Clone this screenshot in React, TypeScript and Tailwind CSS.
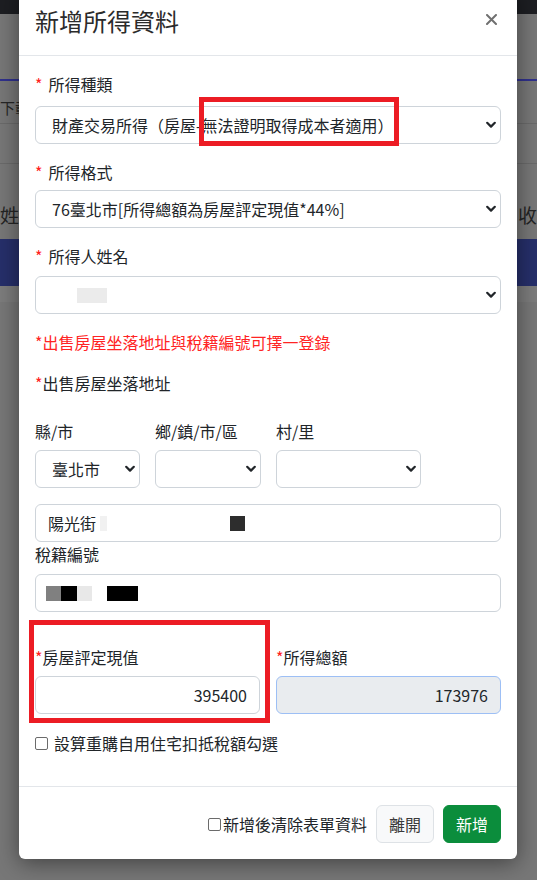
import type { ReactNode } from "react";

const FONT = "font-['Noto_Sans_CJK_TC','Noto_Sans',sans-serif]";

function Chevron() {
  return (
    <svg width="10" height="8" viewBox="0 0 10 8" className="mr-1 shrink-0" aria-hidden="true">
      <path d="M1.2 1.8 5 5.6l3.8-3.8" fill="none" stroke="#212529" strokeWidth="2.2" strokeLinecap="round" strokeLinejoin="round" />
    </svg>
  );
}

function FakeSelect({ children, className = "" }: { children?: ReactNode; className?: string }) {
  return (
    <div
      className={`flex h-[38px] items-center rounded-md border border-[#ced4da] bg-white pl-4 text-base text-[#212529] ${className}`}
    >
      <div className="flex min-w-0 flex-1 items-center whitespace-nowrap">{children}</div>
      <Chevron />
    </div>
  );
}

function Req({ space = false }: { space?: boolean }) {
  return <span className={`text-[#ff2020] ${space ? "mr-1.5" : ""}`}>*</span>;
}

function Box({ className }: { className: string }) {
  return <span className={`inline-block h-[15px] ${className}`} />;
}

function Check({ className = "" }: { className?: string }) {
  return (
    <span
      className={`inline-block h-[13px] w-[13px] shrink-0 rounded-[2px] border border-[#6b6b6b] bg-white ${className}`}
    />
  );
}

export default function App() {
  return (
    <div className={`relative h-[880px] w-[537px] overflow-hidden bg-[#777777] ${FONT}`}>
      {/* dimmed page behind the dialog */}
      <div className="flex flex-col">
        <div className="h-[14px] bg-[#1d1e22]" />
        <div className="h-[65px]" />
        <div className="h-[2px] bg-[#30318c]" />
        <div className="flex h-[43px] items-center border-b border-[#6a6a6a] pt-[13px] text-[15px] text-[#262626]">
          下載
        </div>
        <div className="h-[40px] border-b border-[#6a6a6a]" />
        <div className="flex h-[75px] items-center pt-[28px] text-[19px] text-[#242424]">
          <span className="w-[518px] shrink-0">姓名</span>
          <span className="shrink-0 whitespace-nowrap">收入</span>
        </div>
        <div className="h-[47px] bg-[#262f6a]" />
        <div className="h-[16px] bg-[#7c7c7c]" />
      </div>

      {/* dialog */}
      <div className="absolute left-[19px] top-[-13px] w-[498px] rounded-md bg-white shadow-[0_4px_22px_rgba(0,0,0,0.45)]">
        <div className="flex items-center justify-between border-b border-[#e3e6ea] px-4 py-4">
          <h5 className="text-[24px] leading-[36px] text-[#2b2b2b]">新增所得資料</h5>
          <svg width="11" height="11" viewBox="0 0 11 11" className="mr-[4px] mt-[-4px]" aria-hidden="true">
            <path d="M1 1l9 9M10 1l-9 9" stroke="#707070" strokeWidth="2" strokeLinecap="round" />
          </svg>
        </div>

        <div className="px-4 pb-[31px] pt-4 text-base leading-6 text-[#212529]">
          <div className="mb-[10px] h-6">
            <Req space />
            所得種類
          </div>
          <FakeSelect>財產交易所得（房屋-無法證明取得成本者適用）</FakeSelect>

          <div className="mb-[6px] mt-4 h-6">
            <Req space />
            所得格式
          </div>
          <FakeSelect>76臺北市[所得總額為房屋評定現值*44%]</FakeSelect>

          <div className="mb-2 mt-4 h-6">
            <Req space />
            所得人姓名
          </div>
          <FakeSelect>
            <span className="ml-[25px] inline-block h-[15px] w-[30px] bg-[#ebebeb]" />
          </FakeSelect>

          <p className="mt-4 text-[#ff2424]">*出售房屋坐落地址與稅籍編號可擇一登錄</p>

          <p className="mt-[17px]">
            <Req />
            出售房屋坐落地址
          </p>

          <div className="mt-6 flex gap-[15px]">
            <div className="w-[105px]">
              <div className="mb-[7px]">縣/市</div>
              <FakeSelect>臺北市</FakeSelect>
            </div>
            <div className="w-[106px]">
              <div className="mb-[7px]">鄉/鎮/市/區</div>
              <FakeSelect />
            </div>
            <div className="w-[145px]">
              <div className="mb-[7px]">村/里</div>
              <FakeSelect />
            </div>
          </div>

          <div className="mt-4 flex h-[38px] items-center rounded-md border border-[#ced4da] pl-3">
            <span>陽光街</span>
            <Box className="ml-[4px] w-[7px] bg-[#f1f1f1]" />
            <Box className="ml-[123px] w-[15px] bg-[#2d2d2d]" />
          </div>

          <div>稅籍編號</div>

          <div className="mt-2 flex h-[38px] items-center rounded-md border border-[#ced4da] pl-[10px]">
            <Box className="w-[15px] bg-[#808080]" />
            <Box className="w-[16px] bg-black" />
            <Box className="w-[15px] bg-[#e8e8e8]" />
            <Box className="ml-[15px] w-[31px] bg-black" />
          </div>

          <div className="mt-[33px] grid grid-cols-2 gap-4">
            <div>
              <div className="mb-[7px]">
                <Req />
                房屋評定現值
              </div>
              <div className="flex h-[38px] items-center justify-end rounded-md border border-[#ced4da] px-3">
                395400
              </div>
            </div>
            <div>
              <div className="mb-[7px]">
                <Req />
                所得總額
              </div>
              <div className="flex h-[38px] items-center justify-end rounded-md border border-[#9dbff5] bg-[#e9ecef] px-3">
                173976
              </div>
            </div>
          </div>

          <label className="mt-[17px] flex items-center gap-[6px]">
            <Check />
            設算重購自用住宅扣抵稅額勾選
          </label>
        </div>

        <div className="flex items-center justify-end gap-[9px] border-t border-[#e3e6ea] px-4 pb-4 pt-[18px] text-base text-[#212529]">
          <label className="flex items-center gap-[2px]">
            <Check />
            新增後清除表單資料
          </label>
          <button className="h-[38px] rounded-md border border-[#dee2e6] bg-[#f8f9fa] px-3 text-[#3a3a3a]">離開</button>
          <button className="h-[38px] rounded-md border border-[#0b8d3c] bg-[#0b8d3c] px-3 text-white">新增</button>
        </div>
      </div>

      {/* annotation boxes drawn over the screenshot */}
      <div className="pointer-events-none absolute left-[199px] top-[97px] h-[49px] w-[200px] border-[5px] border-[#ec1c24]" />
      <div className="pointer-events-none absolute left-[29px] top-[620px] h-[103px] w-[241px] border-[5px] border-[#ec1c24]" />
    </div>
  );
}
